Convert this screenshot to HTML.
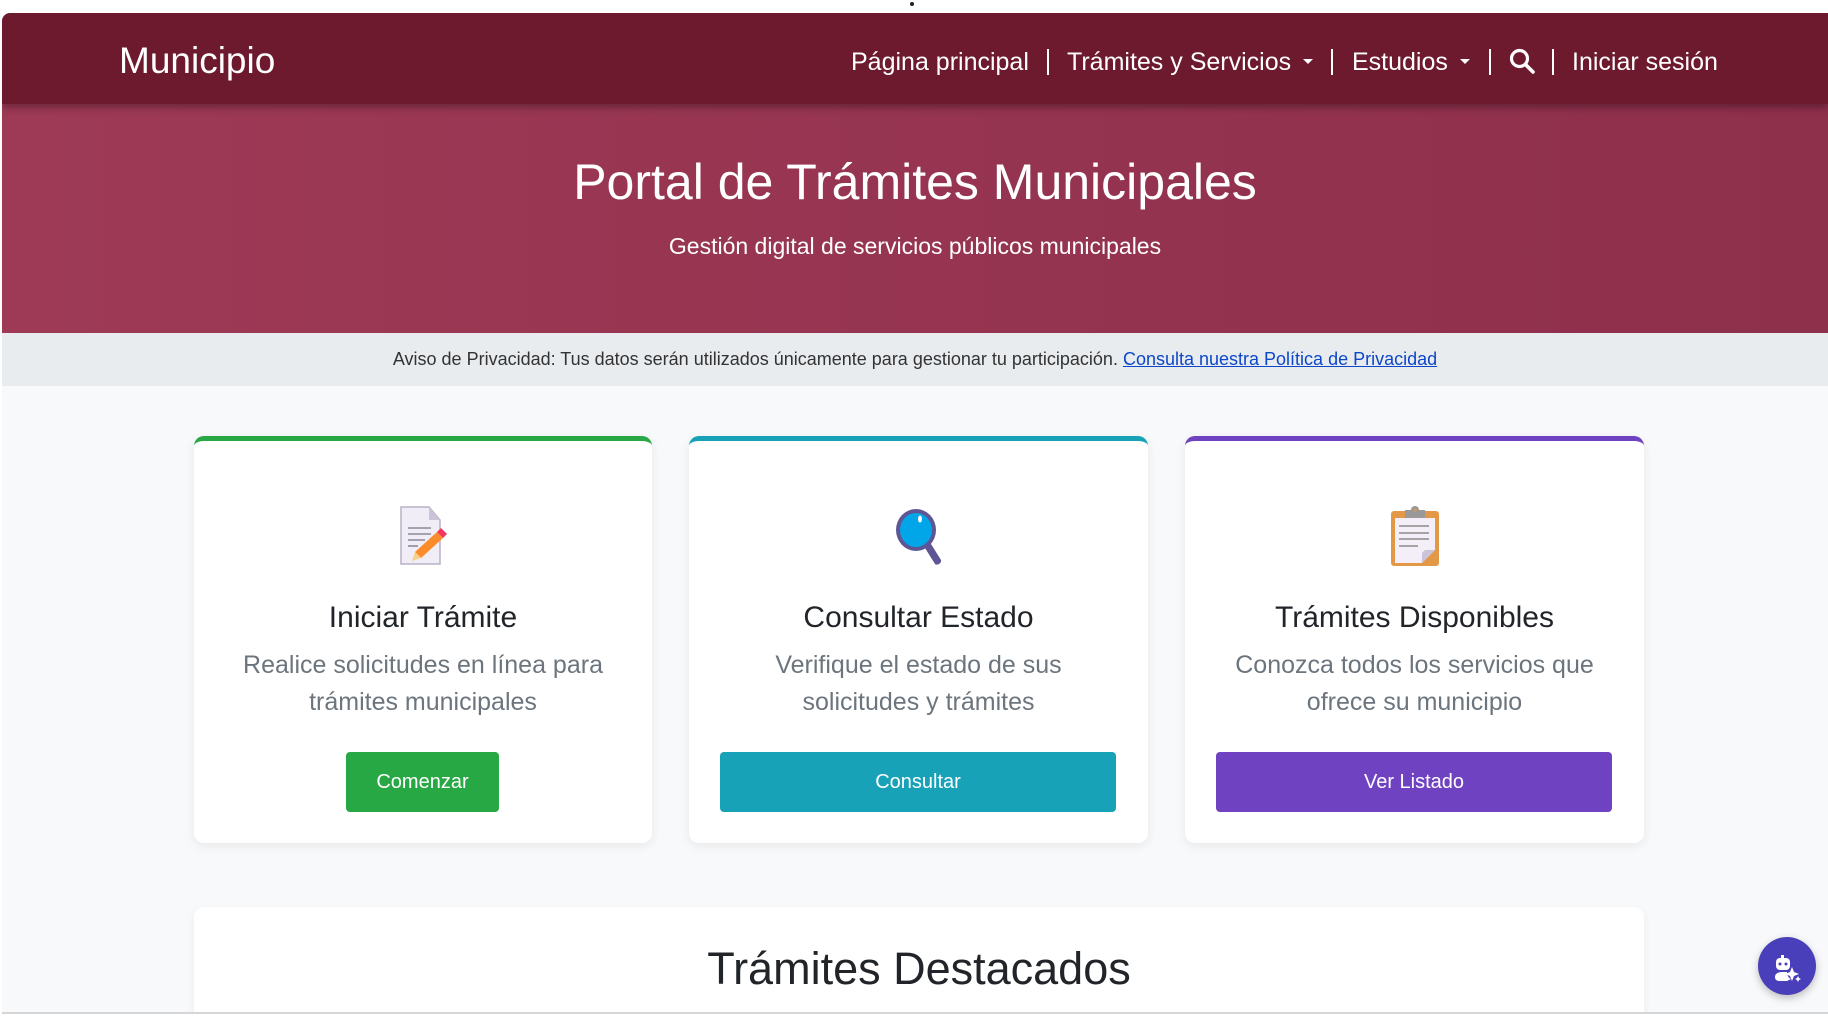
<!DOCTYPE html>
<html><head><meta charset="utf-8"><style>
*{margin:0;padding:0;box-sizing:border-box}
html,body{width:1828px;height:1020px;overflow:hidden}
body{background:#fff;font-family:"Liberation Sans",Arial,sans-serif;position:relative}
.page{position:absolute;left:2px;top:13px;width:1826px;height:1001px;background:#f8f9fa;border-top-left-radius:8px;overflow:hidden;border-bottom:2px solid #d6d6d6}
.nav{position:absolute;left:0;top:0;width:100%;height:91px;background:#6d1a2f;color:#fff;box-shadow:0 3px 8px rgba(0,0,0,.35);z-index:2}
.brand{position:absolute;left:117px;top:27px;font-size:37px}
.nav .it{position:absolute;top:35px;font-size:25px;white-space:nowrap}
.sep{position:absolute;top:36px;width:2px;height:26px;background:#fff}
.caret{display:inline-block;width:0;height:0;border-left:5px solid transparent;border-right:5px solid transparent;border-top:5px solid #fff;vertical-align:middle;margin-left:12px;margin-top:-4px}
.hero{position:absolute;left:0;top:91px;width:100%;height:229px;background:linear-gradient(90deg,#9e3a56,#8e2f4c);color:#fff;text-align:center}
.hero h1{position:absolute;width:100%;top:49px;font-weight:normal;font-size:50px}
.hero p{position:absolute;width:100%;top:129px;font-size:23px}
.priv{position:absolute;left:0;top:320px;width:100%;height:53px;background:#e9ecef;text-align:center;font-size:18px;color:#333;line-height:53px}
.priv a{color:#0d47c9;text-decoration:underline}
.card{position:absolute;top:423px;height:407px;background:#fff;border-radius:10px;border-top:5px solid;box-shadow:0 3px 10px rgba(0,0,0,.07);text-align:center}
.card .ic{position:absolute;left:50%;top:65px;transform:translateX(-50%);width:60px;height:60px}
.card h3{position:absolute;width:100%;top:160px;font-weight:normal;font-size:30px;color:#212529}
.card p{position:absolute;width:100%;top:206px;font-size:25px;line-height:37px;color:#6c757d}
.btn{position:absolute;top:311px;height:60px;line-height:60px;color:#fff;font-size:20px;border-radius:4px}
.feat{position:absolute;left:192px;top:894px;width:1450px;height:120px;background:#fff;border-radius:10px;box-shadow:0 3px 10px rgba(0,0,0,.05);text-align:center}
.feat h2{font-weight:normal;font-size:45px;color:#212529;margin-top:36px}
.chat{position:absolute;left:1756px;top:924px;width:58px;height:58px;border-radius:50%;background:#4a3fba;box-shadow:0 3px 8px rgba(0,0,0,.25)}
</style></head><body>
<div style="position:absolute;left:910px;top:2px;width:4px;height:4px;border-radius:50%;background:#222"></div>
<div class="page">
<div class="nav">
<div class="brand">Municipio</div>
<div class="it" style="left:849px">Página principal</div>
<div class="sep" style="left:1045px"></div>
<div class="it" style="left:1065px">Trámites y Servicios<span class="caret"></span></div>
<div class="sep" style="left:1329px"></div>
<div class="it" style="left:1350px">Estudios<span class="caret"></span></div>
<div class="sep" style="left:1487px"></div>
<svg style="position:absolute;left:1507px;top:35px" width="26" height="28" viewBox="0 0 26 28"><circle cx="10.5" cy="10.5" r="8" fill="none" stroke="#fff" stroke-width="3.2"/><line x1="16.5" y1="16.5" x2="24" y2="24" stroke="#fff" stroke-width="3.6" stroke-linecap="round"/></svg>
<div class="sep" style="left:1550px"></div>
<div class="it" style="left:1570px">Iniciar sesión</div>
</div>
<div class="hero"><h1>Portal de Trámites Municipales</h1><p>Gestión digital de servicios públicos municipales</p></div>
<div class="priv">Aviso de Privacidad: Tus datos serán utilizados únicamente para gestionar tu participación. <a>Consulta nuestra Política de Privacidad</a></div>

<div class="card" style="left:192px;width:458px;border-color:#28a745">
<svg class="ic" viewBox="0 0 60 60"><path d="M8 1h28l11 13v44H8z" fill="#f1edf7" stroke="#b9b2c6" stroke-width="1.5"/><path d="M36 1v13h11z" fill="#cbc4d8"/><g stroke="#8e879a" stroke-width="1.6"><line x1="15" y1="22" x2="38" y2="22"/><line x1="15" y1="28" x2="38" y2="28"/><line x1="15" y1="34" x2="32" y2="34"/><line x1="15" y1="40" x2="25" y2="40"/></g><path d="M22 46l22-20 6 6-22 20z" fill="#fb8c2c"/><path d="M44 26l4-4 6 6-4 4z" fill="#f7365e"/><path d="M22 46l6 6-9 3z" fill="#f7cf8a"/></svg>
<h3>Iniciar Trámite</h3><p>Realice solicitudes en línea para<br>trámites municipales</p>
<div class="btn" style="left:152px;width:153px;background:#28a745">Comenzar</div></div>

<div class="card" style="left:687px;width:459px;border-color:#17a2b8">
<svg class="ic" viewBox="0 0 60 60"><path d="M36 42l6-4 10 16c1 3-4 6-6 4z" fill="#5e5694"/><ellipse cx="27" cy="24" rx="20" ry="21" fill="#5e5694"/><ellipse cx="27" cy="24" rx="16" ry="17" fill="#00a6e8"/><ellipse cx="31" cy="13" rx="2" ry="3.5" fill="#fff"/></svg>
<h3>Consultar Estado</h3><p>Verifique el estado de sus<br>solicitudes y trámites</p>
<div class="btn" style="left:31px;width:396px;background:#17a2b8">Consultar</div></div>

<div class="card" style="left:1183px;width:459px;border-color:#6f42c1">
<svg class="ic" viewBox="0 0 60 60"><rect x="6" y="5" width="48" height="55" rx="3" fill="#e39848"/><path d="M10 12h40v32l-13 13H10z" fill="#f3eef8"/><path d="M37 57l13-13h-10l-3 3z" fill="#cbc4d8"/><path d="M20 4h20v8H20z" fill="#999"/><circle cx="30" cy="4" r="4" fill="#999"/><circle cx="30" cy="4" r="1.5" fill="#e39848"/><g stroke="#999" stroke-width="1.8"><line x1="14" y1="20" x2="44" y2="20"/><line x1="14" y1="27" x2="44" y2="27"/><line x1="14" y1="33" x2="44" y2="33"/><line x1="14" y1="40" x2="33" y2="40"/></g></svg>
<h3>Trámites Disponibles</h3><p>Conozca todos los servicios que<br>ofrece su municipio</p>
<div class="btn" style="left:31px;width:396px;background:#6f42c1">Ver Listado</div></div>

<div class="feat"><h2>Trámites Destacados</h2></div>
<div class="chat"><svg width="58" height="58" viewBox="0 0 58 58"><rect x="23" y="18" width="3" height="4" fill="#fff"/><rect x="18" y="21" width="14" height="12" rx="4" fill="#fff"/><circle cx="22" cy="27" r="1.5" fill="#4a3fba"/><circle cx="28" cy="27" r="1.5" fill="#4a3fba"/><path d="M17 40c0-4 4-5 8-5h4c0 4 2 6 4 7l-4 2h-7c-3 0-5-1-5-4z" fill="#fff"/><path d="M34 30l2 5 5 2-5 2-2 5-2-5-5-2 5-2z" fill="#fff"/><path d="M40 39l1 2 2 1-2 1-1 2-1-2-2-1 2-1z" fill="#fff"/></svg></div>
</div>
</body></html>
